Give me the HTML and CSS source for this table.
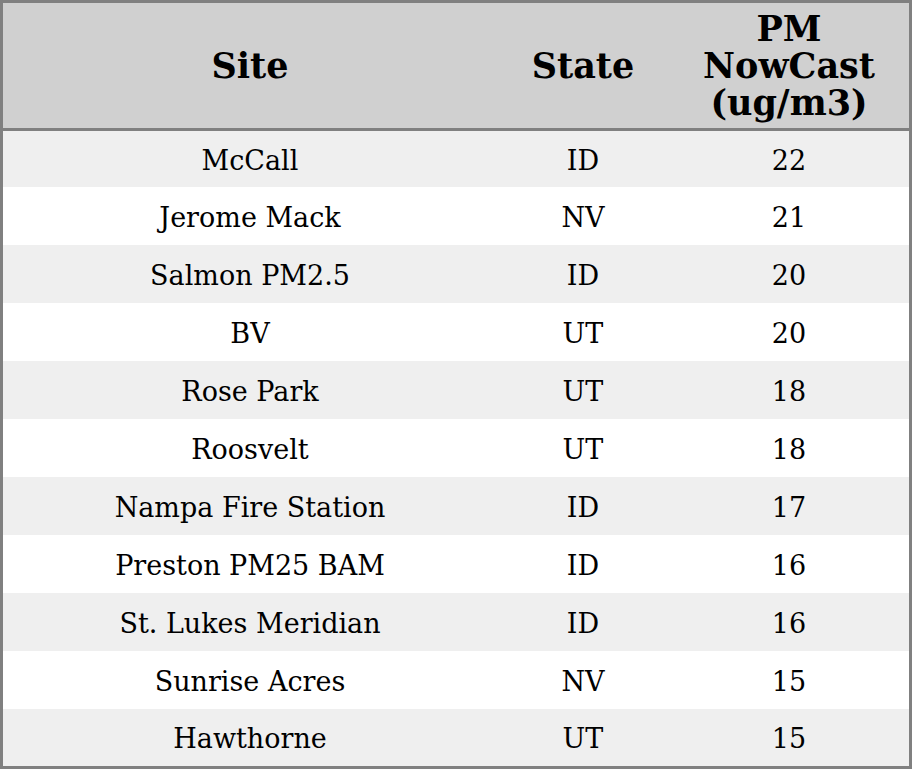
FILE: index.html
```html
<!DOCTYPE html>
<html>
<head>
<meta charset="utf-8">
<link rel="stylesheet" href="styles.css">
</head>
<body>
<table class="aq-table">
  <colgroup>
    <col class="c-site">
    <col class="c-state">
    <col class="c-pm">
  </colgroup>
  <thead>
    <tr>
      <th>Site</th>
      <th>State</th>
      <th>PM<br>NowCast<br>(ug/m3)</th>
    </tr>
  </thead>
  <tbody>
    <tr><td>McCall</td><td>ID</td><td>22</td></tr>
    <tr><td>Jerome Mack</td><td>NV</td><td>21</td></tr>
    <tr><td>Salmon PM2.5</td><td>ID</td><td>20</td></tr>
    <tr><td>BV</td><td>UT</td><td>20</td></tr>
    <tr><td>Rose Park</td><td>UT</td><td>18</td></tr>
    <tr><td>Roosvelt</td><td>UT</td><td>18</td></tr>
    <tr><td>Nampa Fire Station</td><td>ID</td><td>17</td></tr>
    <tr><td>Preston PM25 BAM</td><td>ID</td><td>16</td></tr>
    <tr><td>St. Lukes Meridian</td><td>ID</td><td>16</td></tr>
    <tr><td>Sunrise Acres</td><td>NV</td><td>15</td></tr>
    <tr><td>Hawthorne</td><td>UT</td><td>15</td></tr>
  </tbody>
</table>
</body>
</html>
```
FILE: styles.css
```css
html, body {
  margin: 0;
  padding: 0;
  background: #ffffff;
}

.aq-table {
  width: 912px;
  border-collapse: separate;
  border-spacing: 0;
  border: 3px solid #808080;
  font-family: "DejaVu Serif", serif;
  color: #000;
  table-layout: fixed;
}

.c-site { width: 494px; }
.c-state { width: 172px; }
.c-pm { width: 240px; }

.aq-table th {
  background: #d0d0d0;
  font-size: 35px;
  font-weight: bold;
  line-height: 37px;
  padding: 7px 0;
  text-align: center;
  border-bottom: 3px solid #808080;
}

.aq-table td {
  font-size: 27px;
  line-height: 32px;
  padding: 15px 0 11px;
  text-align: center;
}

.aq-table tbody tr:first-child td {
  padding: 14px 0 10px;
}

.aq-table tbody tr:last-child td {
  padding: 14px 0 11px;
}

.aq-table tbody tr:nth-child(odd) td {
  background: #efefef;
}
```
